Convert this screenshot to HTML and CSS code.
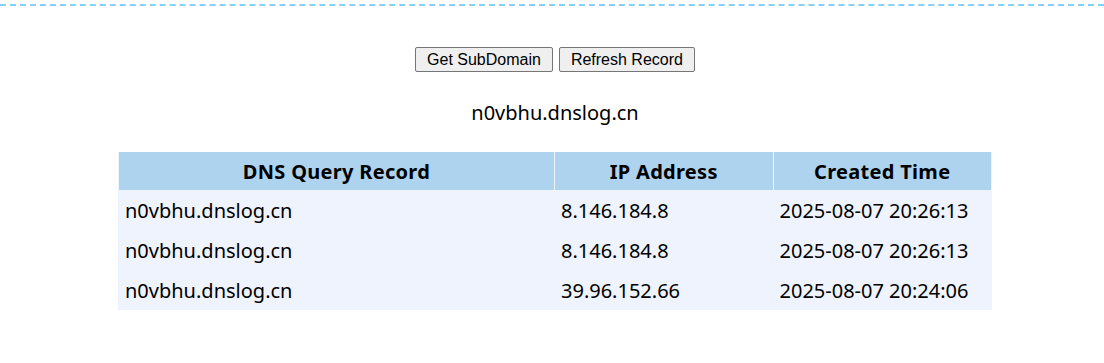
FILE: index.html
```html
<!DOCTYPE html>
<html lang="en">
<head>
    <meta charset="UTF-8">
    <title>DNSLog Platform</title>
    <link rel="stylesheet" href="styles.css">
</head>
<body>
    <div class="divider"></div>
    <div class="content">
        <div class="actions">
            <button id="getDomainBtn">Get SubDomain</button>
            <button id="refreshBtn">Refresh Record</button>
        </div>
        <div id="myDomain">n0vbhu.dnslog.cn</div>
        <table id="myRecords">
            <thead>
                <tr>
                    <th class="col-domain">DNS Query Record</th>
                    <th class="col-ip">IP Address</th>
                    <th class="col-time">Created Time</th>
                </tr>
            </thead>
            <tbody>
                <tr>
                    <td>n0vbhu.dnslog.cn</td>
                    <td>8.146.184.8</td>
                    <td>2025-08-07 20:26:13</td>
                </tr>
                <tr>
                    <td>n0vbhu.dnslog.cn</td>
                    <td>8.146.184.8</td>
                    <td>2025-08-07 20:26:13</td>
                </tr>
                <tr>
                    <td>n0vbhu.dnslog.cn</td>
                    <td>39.96.152.66</td>
                    <td>2025-08-07 20:24:06</td>
                </tr>
            </tbody>
        </table>
    </div>
</body>
</html>
```

FILE: styles.css
```css
body {
    margin: 0;
    font-family: "Noto Sans", "Noto Sans CJK SC", sans-serif;
    color: #000;
    background: #fff;
}

.divider {
    margin-top: 4px;
    border-top: 2px dashed #87cefa;
}

.content {
    padding-left: 6px;
}

.actions {
    display: flex;
    justify-content: center;
    gap: 6px;
    margin-top: 41px;
}

.actions button {
    font-family: "Liberation Sans", Arial, sans-serif;
    font-size: 16px;
    height: 25px;
    padding: 1px 11px;
    color: #000;
    background: #efefef;
    border: 1px solid #767676;
    border-radius: 2px;
}

#myDomain {
    text-align: center;
    font-size: 20px;
    margin-top: 27px;
    line-height: 28px;
}

#myRecords {
    width: 874px;
    margin: 25px auto 0;
    border-spacing: 1px 0;
    background: #eef3fd;
    font-size: 20px;
}

#myRecords th {
    height: 38px;
    padding: 0;
    background: #aed3ee;
    font-weight: bold;
    letter-spacing: 0.3px;
    text-align: center;
}

#myRecords td {
    height: 40px;
    padding: 0 6px;
    text-align: left;
}

.col-domain {
    width: 50%;
}

.col-ip,
.col-time {
    width: 25%;
}
```
